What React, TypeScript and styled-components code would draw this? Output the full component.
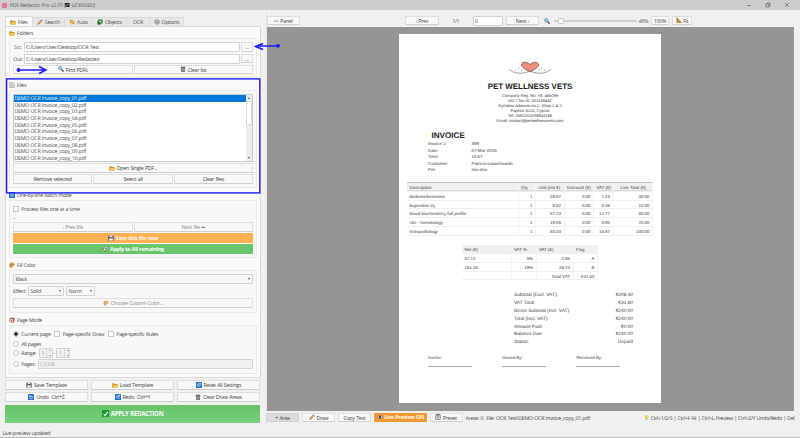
import React from 'react';
import styled, { createGlobalStyle, css } from 'styled-components';

const GlobalStyle = createGlobalStyle`
  * { box-sizing: border-box; }
  html, body { margin: 0; overflow: hidden; }
  body {
    font-family: 'Open Sans', 'Noto Sans', sans-serif;
    font-size: 5.3px;
    letter-spacing: -0.28px;
    word-spacing: 0.35px;
    color: #484848;
    text-rendering: geometricPrecision;
  }
`;

/* ---------- icons ---------- */

const icons: Record<string, React.ReactNode> = {
  app: (
    <>
      <rect x="1" y="1" width="14" height="14" rx="2" fill="#e8476a" />
      <path d="M4 4h8v3H4zM4 9h8v3H4z" fill="#f9a9b8" />
    </>
  ),
  licensed: (
    <>
      <rect width="16" height="16" rx="1" fill="#222" />
      <path d="M3 13V8l3 2 4-6 3 3" stroke="#ddd" strokeWidth="2" fill="none" />
    </>
  ),
  folder: (
    <>
      <path d="M1 14V3h5l2 2h6v9z" fill="#c98a1b" />
      <path d="M1 14l2-7h13l-2 7z" fill="#ffc94a" stroke="#a87a20" strokeWidth=".7" />
    </>
  ),
  pencil: (
    <>
      <path d="M1 15l2-5 3 3z" fill="#444" />
      <path d="M3 10l7-7 3 3-7 7z" fill="#e9a13b" stroke="#80551c" strokeWidth=".8" />
      <path d="M10 3l2-2 3 3-2 2z" fill="#d55c4b" />
    </>
  ),
  auto: (
    <>
      <path d="M8 0l3 5 5 3-5 3-3 5-3-5-5-3 5-3z" fill="#e8a42c" />
      <path d="M2 2l4 1-3 3zM11 12l3-3 0 5z" fill="#8c6520" />
      <circle cx="8" cy="8" r="1.6" fill="#fff3c4" />
    </>
  ),
  objects: (
    <>
      <rect x="3" y="1" width="12" height="11" fill="#2c8c45" />
      <rect x="1" y="5" width="9" height="10" fill="#226b37" />
      <path d="M5 6l3-3 4 4-3 3z" fill="#b7e3a2" />
    </>
  ),
  gear: (
    <g fill="none" stroke="#686868" strokeWidth="1.4">
      <circle cx="8" cy="8" r="6.2" />
      <circle cx="8" cy="8" r="2.6" />
      <path d="M8 2v3M8 11v3M2 8h3M11 8h3M4 4l2 2M10 10l2 2" />
    </g>
  ),
  search: (
    <>
      <path d="M9 9l6 6" stroke="#333" strokeWidth="3" />
      <circle cx="6" cy="6" r="4.5" fill="#9fd6f5" stroke="#42738f" strokeWidth="1.6" />
    </>
  ),
  trash: (
    <>
      <path d="M3 4h10l-1 12H4z" fill="#777" stroke="#444" />
      <path d="M2 2h12v2H2z" fill="#444" />
      <path d="M6 6v8M8 6v8M10 6v8" stroke="#ccc" strokeWidth=".8" />
    </>
  ),
  doc: (
    <>
      <path d="M2 1h8l4 4v10H2z" fill="#eee" stroke="#777" strokeWidth="1.3" />
      <path d="M4 5h5M4 8h8M4 11h8" stroke="#777" strokeWidth="1.2" />
    </>
  ),
  blue: (
    <>
      <rect width="16" height="16" rx="1.5" fill="#1f6fd6" />
      <path d="M12 11H7a3 3 0 010-6h4" stroke="#fff" strokeWidth="1.8" fill="none" />
      <path d="M10 2l4 3-4 3z" fill="#fff" />
    </>
  ),
  undo: (
    <>
      <rect width="16" height="16" rx="1.5" fill="#1f6fd6" />
      <path d="M5 6h4a3 3 0 010 6H4" stroke="#fff" strokeWidth="1.8" fill="none" />
      <path d="M6 3L2 6l4 3z" fill="#fff" />
    </>
  ),
  floppy: (
    <>
      <path d="M1 1h12l2 2v12H1z" fill="#454a54" />
      <rect x="4" y="1" width="8" height="5" fill="#dfe6ee" />
      <rect x="3" y="9" width="10" height="6" fill="#f3f3f3" />
    </>
  ),
  rocket: (
    <>
      <path d="M16 0C9 0 6 4 4 9l3 3c5-2 9-6 9-12z" fill="#f2f6f9" stroke="#567" strokeWidth=".8" />
      <path d="M16 0l-5 1 4 4zM5 6L0 8l3 3zM10 11l-2 5-2-3z" fill="#d64a3c" />
      <circle cx="9.5" cy="6.5" r="2.2" fill="#2675b8" />
      <path d="M4 10l-3 5 5-3z" fill="#f7b733" />
    </>
  ),
  palette: (
    <>
      <path d="M8 1c5 0 8 3 7 7-1 3-4 1-5 3s1 4-3 4C3 15 0 12 1 7c1-4 4-6 7-6z" fill="#dc9330" />
      <circle cx="5" cy="5" r="1.4" fill="#d7402f" />
      <circle cx="10" cy="4" r="1.4" fill="#ffe36b" />
      <circle cx="4" cy="10" r="1.4" fill="#5a4a9c" />
      <circle cx="12" cy="7" r="1.2" fill="#337a3b" />
    </>
  ),
  target: (
    <>
      <circle cx="8" cy="8" r="7" fill="#cf4a3f" />
      <circle cx="7" cy="9" r="4.3" fill="#e9e4ea" />
      <circle cx="7" cy="9" r="2" fill="#cf4a3f" />
      <path d="M7 9l7-7 2 0-1 3-3 1z" fill="#3c7fc0" />
    </>
  ),
  check: (
    <>
      <rect width="16" height="16" rx="1.5" fill="#169a2c" />
      <path d="M3.5 8.5l3 3.5 6-8" stroke="#fff" strokeWidth="2.2" fill="none" />
    </>
  ),
  eye: (
    <>
      <path d="M0 8q8-9 16 0-8 9-16 0z" fill="#fff" stroke="#4a3a3a" strokeWidth="1.3" />
      <circle cx="8" cy="8" r="3.4" fill="#4b2a55" />
    </>
  ),
  clipboard: (
    <>
      <rect x="2" y="2" width="12" height="13" rx="1" fill="#eee" stroke="#555" strokeWidth="1.8" />
      <rect x="5" y="0" width="6" height="4" fill="#555" />
      <path d="M5 7h6M5 10h6" stroke="#555" strokeWidth="1.3" />
    </>
  ),
  bulb: (
    <>
      <circle cx="8" cy="6" r="5" fill="#ffd94a" stroke="#c79a1d" strokeWidth="1" />
      <path d="M6 11h4v4H6z" fill="#777" />
    </>
  ),
  ruler: (
    <>
      <path d="M2 1l13 14H2z" fill="#c88622" stroke="#6d4a14" strokeWidth="1" />
      <path d="M5 9l3 3H5z" fill="#f7ead0" />
    </>
  ),
};

const Svg = styled.svg<{ $size: number; $dim?: boolean }>`
  flex: none;
  width: ${({ $size }) => $size}px;
  height: ${({ $size }) => $size}px;
  margin-right: 1.7px;
  opacity: ${({ $dim }) => ($dim ? 0.7 : 1)};
`;

const Icon: React.FC<{ name: string; size?: number; dim?: boolean }> = ({
  name,
  size = 6,
  dim,
}) => (
  <Svg viewBox="0 0 16 16" $size={size} $dim={dim}>
    {icons[name]}
  </Svg>
);

/* ---------- window ---------- */

const Window = styled.div`
  position: relative;
  width: 800px;
  height: 438px;
  display: flex;
  flex-direction: column;
  background: #f0f0f0;
  white-space: nowrap;
  overflow: hidden;
`;

const TitleBar = styled.header`
  display: flex;
  align-items: center;
  height: 9.5px;
  padding: 0.8px 10px 0 1.5px;
  background: #cdcdcd;
  color: #5c5c5c;
`;

const WindowButtons = styled.svg`
  width: 46px;
  height: 6px;
  margin-left: auto;
`;

const Body = styled.div`
  display: flex;
  height: 418px;
`;

const Sidebar = styled.aside`
  width: 266.5px;
  padding: 6.5px 5px 0;
  border-right: 1px solid #e6e6e6;
`;

const Main = styled.main`
  width: 527px;
  padding-top: 5px;
`;

const StatusBar = styled.footer`
  height: 10.5px;
  padding-left: 2.5px;
  line-height: 11px;
  border-bottom: 1px solid #bdbdbd;
`;

/* ---------- controls ---------- */

const Button = styled.button<{
  $w?: number;
  $tone?: 'orange' | 'lightOrange' | 'green' | 'pressed';
  $off?: boolean;
}>`
  display: flex;
  align-items: center;
  justify-content: center;
  flex: ${({ $w }) => ($w ? 'none' : '1 1 0')};
  width: ${({ $w }) => ($w ? `${$w}px` : 'auto')};
  height: 9.8px;
  padding: 0;
  font: inherit;
  letter-spacing: inherit;
  word-spacing: inherit;
  color: ${({ $off }) => ($off ? '#8a8a8a' : '#444')};
  background: #f8f8f8;
  border: 1px solid #dedede;
  border-bottom-color: #cecece;
  border-radius: 1px;

  ${({ $tone }) =>
    $tone === 'pressed' &&
    css`
      background: #dcdcdc;
      border-color: #d0d0d0;
    `}
  ${({ $tone }) =>
    ($tone === 'orange' || $tone === 'lightOrange') &&
    css`
      background: ${$tone === 'orange' ? '#f0982f' : '#ffb055'};
      border: 0;
      color: #fff6e8;
      font-weight: 700;
    `}
  ${({ $tone }) =>
    $tone === 'green' &&
    css`
      background: #69c56c;
      border: 0;
      color: #f4fff4;
      font-weight: 700;
    `}
`;

const ApplyButton = styled(Button)`
  width: 255px;
  height: 18px;
  margin-top: 2.6px;
  background: linear-gradient(#66c169, #79d07b);
  font-size: 6.1px;
  letter-spacing: -0.25px;
`;

const Row = styled.div<{ $gap?: number; $h?: number; $mt?: number }>`
  display: flex;
  align-items: center;
  gap: ${({ $gap = 1 }) => $gap}px;
  height: ${({ $h = 10 }) => $h}px;
  margin-top: ${({ $mt = 0 }) => $mt}px;
`;

const Field = styled.div<{ $w?: number; $off?: boolean }>`
  display: flex;
  align-items: center;
  flex: ${({ $w }) => ($w ? 'none' : '1')};
  width: ${({ $w }) => ($w ? `${$w}px` : 'auto')};
  height: 10px;
  padding-left: 1px;
  background: ${({ $off }) => ($off ? '#f0f0f0' : '#fff')};
  border: 1px solid #d2d2d2;
  border-radius: 1px;
  color: ${({ $off }) => ($off ? '#a0a0a0' : '#484848')};
`;

const FieldLabel = styled.span<{ $w: number; $align?: string }>`
  width: ${({ $w }) => $w}px;
  text-align: ${({ $align = 'left' }) => $align};
`;

const Select = styled(Field)`
  justify-content: space-between;
  padding: 0 2.5px 0 1.5px;
  background: #f7f7f7;

  &::after {
    content: '';
    border: 1.6px solid transparent;
    border-top: 2px solid #555;
    border-bottom: 0;
  }
`;

const Spin = styled(Field)`
  padding-left: 2px;

  &::before {
    content: '';
    order: 2;
    width: 1px;
    height: 8px;
    margin: 0 2px;
    background: #dadada;
  }

  &::after {
    content: '';
    order: 3;
    width: 2px;
    height: 4px;
    border-top: 1px solid #aaa;
    border-bottom: 1px solid #aaa;
  }
`;

const Check = styled.span<{ $round?: boolean; $on?: boolean }>`
  flex: none;
  width: 6px;
  height: 6px;
  border: 1px solid #c6c6c6;
  border-radius: ${({ $round }) => ($round ? '50%' : '0')};
  background: ${({ $on }) =>
    $on ? 'radial-gradient(circle, #222 0 1.5px, #fff 1.9px)' : '#fff'};
`;

const Option = styled.label<{ $w?: number }>`
  display: flex;
  align-items: center;
  gap: 2.2px;
  width: ${({ $w }) => ($w ? `${$w}px` : 'auto')};
`;

/* ---------- tabs and groups ---------- */

const Tabs = styled.nav`
  display: flex;
  align-items: flex-end;
  height: 10px;
`;

const Tab = styled.div<{ $w: number; $active?: boolean }>`
  display: flex;
  align-items: center;
  justify-content: center;
  width: ${({ $w }) => $w}px;
  height: ${({ $active }) => ($active ? 10 : 9.4)}px;
  padding-top: 0.4px;
  background: ${({ $active }) => ($active ? '#fafafa' : '#e7e7e7')};
  border: 1px solid #dadada;
  border-bottom: 0;
  border-left-width: ${({ $active }) => ($active ? 1 : 0)}px;
`;

const Pane = styled.div`
  width: 256px;
  height: 351.5px;
  padding: 1px 3px 0;
  background: #fafafa;
  border: 1px solid #dadada;
`;

const Group = styled.section<{ $h: number }>`
  display: flex;
  flex-direction: column;
  height: ${({ $h }) => $h}px;
`;

const Legend = styled.div`
  display: flex;
  align-items: center;
  flex: none;
  height: 10px;
  padding-top: 0.9px;
`;

const GroupBox = styled.div<{ $pt?: number }>`
  flex: 1;
  margin-bottom: 2px;
  padding: ${({ $pt = 3 }) => $pt}px 3px 0;
  background: #f8f8f8;
  border: 1px solid #e9e9e9;
`;

const FileList = styled.div`
  display: flex;
  height: 67.5px;
  background: #fff;
  border: 1px solid #c8c8c8;
`;

const FileRows = styled.div`
  flex: 1;
`;

const FileRow = styled.div<{ $selected?: boolean }>`
  height: 6.68px;
  padding-left: 0.5px;
  line-height: 6.8px;
  background: ${({ $selected }) => ($selected ? '#0078d7' : 'transparent')};
  color: ${({ $selected }) => ($selected ? '#e8f4ff' : '#4c4c4c')};
`;

const ScrollBar = styled.div`
  display: flex;
  flex-direction: column;
  align-items: center;
  justify-content: space-between;
  width: 6px;
  padding: 2px 0;
  background: #ededed;

  &::before,
  &::after {
    content: '';
    border: 1.5px solid transparent;
    border-bottom: 2px solid #555;
    border-top: 0;
  }

  &::after {
    transform: rotate(180deg);
  }
`;

const ScrollThumb = styled.div`
  width: 6px;
  height: 24px;
  margin: 1.5px 0 auto;
  background: #fff;
  border: 1px solid #dcdcdc;
`;

const ButtonRows = styled.div`
  display: grid;
  grid-template-columns: repeat(3, 83px);
  column-gap: 3px;
  row-gap: 2.4px;
  padding-top: 2.5px;
`;

/* ---------- preview ---------- */

const TopTools = styled.div`
  display: flex;
  align-items: center;
  height: 12px;
`;

const PageCount = styled.span`
  width: 34.5px;
  text-align: center;
`;

const Slider = styled.div`
  display: flex;
  align-items: center;
  width: 83px;
  height: 6px;
  margin: 0 2px;

  &::before {
    content: '';
    width: 4px;
    height: 2px;
    background: #d0d0d0;
  }

  &::after {
    content: '';
    flex: 1;
    height: 2px;
    background: #d0d0d0;
  }
`;

const Knob = styled.span`
  width: 6px;
  height: 6px;
  background: #fff;
  border: 1px solid #c4c4c4;
  border-radius: 2px;
`;

const Canvas = styled.div`
  display: flex;
  justify-content: center;
  height: 384.5px;
  padding-top: 7px;
  background: #959595;
`;

const Page = styled.article`
  width: 262px;
  height: 369.5px;
  padding: 27.5px 8px 0;
  background: #fff;
  color: #3a3a3a;
  font-family: 'Liberation Sans', Arial, sans-serif;
  font-size: 4.4px;
  letter-spacing: 0;
  word-spacing: 0;
`;

const Heart = styled.svg`
  display: block;
  width: 44px;
  height: 14px;
  margin: 0 auto;
`;

const Company = styled.h1`
  margin: 7px 0 0;
  font-size: 7.95px;
  line-height: 10px;
  text-align: center;
  color: #1c1c1c;
`;

const Address = styled.div`
  margin-top: 2.2px;
  font-size: 4.05px;
  line-height: 4.88px;
  text-align: center;
`;

const InvoiceTitle = styled.h2`
  margin: 7.6px 0 0 24.5px;
  font-size: 8.1px;
  line-height: 10px;
  color: #1c1c1c;
`;

const Meta = styled.dl`
  display: grid;
  grid-template-columns: 43.5px auto;
  margin: 0 0 0 21px;
  line-height: 6.52px;

  dd, dt { margin: 0; }
`;

const Table = styled.div<{ $cols: string; $w: number; $mt: number }>`
  display: grid;
  grid-template-columns: ${({ $cols }) => $cols};
  width: ${({ $w }) => $w}px;
  margin: ${({ $mt }) => $mt}px auto 0;
`;

const Cell = styled.div<{ $head?: boolean; $left?: boolean; $pl?: number; $rule?: boolean }>`
  height: 8.76px;
  padding: 0 2.5px 0 ${({ $pl = 2.5 }) => $pl}px;
  line-height: 9.4px;
  text-align: ${({ $left, $head }) => ($left || $head ? 'left' : 'right')};
  background: ${({ $head }) => ($head ? '#f0f0f0' : '#fff')};
  border-right: 1px solid #f3f3f3;
  border-bottom: 1px solid #efefef;
  box-shadow: ${({ $rule }) => ($rule ? '0 -1px 0 #c4c4c4, inset 0 -1px 0 #dadada' : 'none')};
`;

const Totals = styled.div`
  width: 119px;
  margin: 11.8px 20px 0 auto;
  font-size: 4.8px;
`;

const TotalRow = styled.div`
  display: flex;
  justify-content: space-between;
  line-height: 7.87px;
`;

const Signatures = styled.div`
  display: flex;
  gap: 30.2px;
  margin: 7.4px 0 0 21px;
`;

const Signature = styled.div`
  width: 44px;
  height: 12.5px;
  line-height: 6px;
  border-bottom: 1px solid #aaa;
`;

const BottomTools = styled.div`
  display: flex;
  align-items: center;
  gap: 3px;
  height: 13px;
  margin-left: -0.5px;
`;

const Hint = styled.span`
  display: flex;
  align-items: center;
  width: 149.5px;
  margin-left: auto;
  letter-spacing: -0.33px;
`;

const Annotations = styled.svg`
  position: absolute;
  inset: 0;
  width: 800px;
  height: 438px;
  pointer-events: none;
`;

const files = Array.from(
  { length: 10 },
  (_, i) => `DEMO OCR Invoice_copy_${String(i + 1).padStart(2, '0')}.pdf`
);

const items = [
  ['dorbene/betamine', '1', '28.57', '0.00', '1.43', '30.00'],
  ['bupredine inj', '1', '9.52', '0.00', '0.48', '10.00'],
  ['blood biochemistry full profile', '1', '67.23', '0.00', '12.77', '80.00'],
  ['cbc - hematology', '1', '19.05', '0.00', '0.95', '20.00'],
  ['histopathology', '1', '84.03', '0.00', '15.97', '100.00'],
];

const vat = [
  ['57.14', '5%', '2.86', 'A'],
  ['151.26', '19%', '28.74', 'B'],
  ['', '', 'Total VAT', '€31.60'],
];

const meta = [
  ['Invoice #:', '399'],
  ['Date:', '07-Mar-2026'],
  ['Time:', '10:57'],
  ['Customer:', 'Patricia Dawichowski'],
  ['Pet:', 'miu miu'],
];

const totals = [
  ['Subtotal (Excl. VAT):', '€208.40'],
  ['VAT Total:', '€31.60'],
  ['Gross Subtotal (Incl. VAT):', '€240.00'],
  ['Total (Incl. VAT):', '€240.00'],
  ['Amount Paid:', '€0.00'],
  ['Balance Due:', '€240.00'],
  ['Status:', 'Unpaid'],
];

const Invoice: React.FC = () => (
  <Page>
    <Heart viewBox="0 0 44 14">
      <path
        d="M22 11C17 8 13 6 13.5 3.5 14 .5 19 .5 22 3.6 25 .5 30 .5 30.5 3.5 31 6 27 8 22 11z"
        fill="#f0907c"
        stroke="#5c4545"
        strokeWidth=".7"
      />
      <path
        d="M1 8.5Q8 14 18 11.5L22 10l4 1.5Q36 14 43 8.5"
        fill="none"
        stroke="#777"
        strokeWidth=".7"
      />
      <path d="M7 9h1M10 7h1M13 9h1M31 9h1M33 7h1M36 9h1" stroke="#777" strokeWidth=".8" />
    </Heart>
    <Company>PET WELLNESS VETS</Company>
    <Address>
      <div>Company Reg. No: HE 466099</div>
      <div>VAT / Tax ID: 50118844C</div>
      <div>Kyriakou Adamou no.2, Shop 2 &amp; 3</div>
      <div>Paphos 8220, Cyprus</div>
      <div>Tel: 26910310/99941186</div>
      <div>Email: contact@petwellnessvets.com</div>
    </Address>
    <InvoiceTitle>INVOICE</InvoiceTitle>
    <Meta>
      {meta.map(([k, v]) => (
        <React.Fragment key={k}>
          <dt>{k}</dt>
          <dd>{v}</dd>
        </React.Fragment>
      ))}
    </Meta>
    <Table $cols="111.5px 17.5px 28.5px 29.5px 19.5px 39.5px" $w={246} $mt={9.4}>
      {['Description', 'Qty', 'Unit (net €)', 'Discount (€)', 'VAT (€)', 'Line Total (€)'].map(
        (h, i) => (
          <Cell key={h} $head $rule $pl={i === 5 ? 7 : 2.5}>
            {h}
          </Cell>
        )
      )}
      {items.map((row) =>
        row.map((c, i) => (
          <Cell key={row[0] + i} $left={i === 0}>
            {c}
          </Cell>
        ))
      )}
    </Table>
    <Table $cols="49.5px 25px 37px 24.5px" $w={136} $mt={9.8}>
      {['Net (€)', 'VAT %', 'VAT (€)', 'Flag'].map((h) => (
        <Cell key={h} $head>
          {h}
        </Cell>
      ))}
      {vat.map((row, r) =>
        row.map((c, i) => (
          <Cell key={`${r}-${i}`} $left={i === 0}>
            {c}
          </Cell>
        ))
      )}
    </Table>
    <Totals>
      {totals.map(([k, v]) => (
        <TotalRow key={k}>
          <span>{k}</span>
          <span>{v}</span>
        </TotalRow>
      ))}
    </Totals>
    <Signatures>
      <Signature>Doctor:</Signature>
      <Signature>Issued By:</Signature>
      <Signature>Received By:</Signature>
    </Signatures>
  </Page>
);

const Push = styled.div<{ $w: number }>`
  flex: none;
  width: ${({ $w }) => $w}px;
`;

export default function App() {
  return (
    <Window>
      <GlobalStyle />
      <TitleBar>
        <Icon name="app" size={5} />
        <Push $w={1.5} />
        PDF Redactor Pro v2.79 [<Icon name="licensed" size={4.5} />
        LICENSED]
        <WindowButtons viewBox="0 0 46 6" fill="none" stroke="#555" strokeWidth=".6">
          <path d="M3 3.5h4M22 2h3v3h-3zM23 2V1h3v3h-1M41 1l4 4M45 1l-4 4" />
        </WindowButtons>
      </TitleBar>
      <Body>
        <Sidebar>
          <Tabs>
            <Tab $w={28} $active>
              <Icon name="folder" /> Files
            </Tab>
            <Tab $w={32}>
              <Icon name="pencil" /> Search
            </Tab>
            <Tab $w={28}>
              <Icon name="auto" /> Auto
            </Tab>
            <Tab $w={34}>
              <Icon name="objects" /> Objects
            </Tab>
            <Tab $w={23}>OCR</Tab>
            <Tab $w={34}>
              <Icon name="gear" /> Options
            </Tab>
          </Tabs>
          <Pane>
            <Group $h={52}>
              <Legend>
                <Icon name="folder" /> Folders
              </Legend>
              <GroupBox>
                <Row>
                  <FieldLabel $w={10} $align="center">Src:</FieldLabel>
                  <Field>C:/Users/User/Desktop/OCR Test</Field>
                  <Button $w={12}>...</Button>
                </Row>
                <Row $mt={1.5}>
                  <FieldLabel $w={10} $align="center">Out:</FieldLabel>
                  <Field>C:/Users/User/Desktop/Redacted</Field>
                  <Button $w={12}>...</Button>
                </Row>
                <Row $mt={1}>
                  <Button>
                    <Icon name="search" /> Find PDFs
                  </Button>
                  <Button>
                    <Icon name="trash" /> Clear list
                  </Button>
                </Row>
              </GroupBox>
            </Group>
            <Group $h={110}>
              <Legend>
                <Icon name="doc" /> Files
              </Legend>
              <GroupBox>
                <FileList>
                  <FileRows>
                    {files.map((f, i) => (
                      <FileRow key={f} $selected={i === 0}>
                        {f}
                      </FileRow>
                    ))}
                  </FileRows>
                  <ScrollBar>
                    <ScrollThumb />
                  </ScrollBar>
                </FileList>
                <Row $mt={1.5}>
                  <Button>
                    <Icon name="folder" /> Open Single PDF...
                  </Button>
                </Row>
                <Row $mt={1}>
                  <Button>Remove selected</Button>
                  <Button>Select all</Button>
                  <Button>Clear files</Button>
                </Row>
              </GroupBox>
            </Group>
            <Group $h={70}>
              <Legend>
                <Icon name="blue" /> One-by-one batch mode
              </Legend>
              <GroupBox $pt={3.5}>
                <Row $h={9}>
                  <Option>
                    <Check /> Process files one at a time
                  </Option>
                </Row>
                <Row $h={7}>...</Row>
                <Row $mt={1.5}>
                  <Button $off>‹ Prev file</Button>
                  <Button $off>Next file ➡</Button>
                </Row>
                <Row $mt={1}>
                  <Button $tone="lightOrange">
                    <Icon name="floppy" /> Save this file now
                  </Button>
                </Row>
                <Row $mt={1}>
                  <Button $tone="green">
                    <Icon name="rocket" /> Apply to All remaining
                  </Button>
                </Row>
              </GroupBox>
            </Group>
            <Group $h={55}>
              <Legend>
                <Icon name="palette" /> Fill Color
              </Legend>
              <GroupBox>
                <Row>
                  <Select>Black</Select>
                </Row>
                <Row $mt={2} $gap={2}>
                  <FieldLabel $w={13}>Effect:</FieldLabel>
                  <Select $w={36}>Solid</Select>
                  <Select $w={29}>Norm</Select>
                </Row>
                <Row $mt={2}>
                  <Button $off>
                    <Icon name="palette" dim /> Choose Custom Color...
                  </Button>
                </Row>
              </GroupBox>
            </Group>
            <Group $h={61}>
              <Legend>
                <Icon name="target" /> Page Mode
              </Legend>
              <GroupBox>
                <Row $gap={3.8}>
                  <Option>
                    <Check $round $on /> Current page
                  </Option>
                  <Option>
                    <Check /> Page-specific Draw
                  </Option>
                  <Option>
                    <Check /> Page-specific Rules
                  </Option>
                </Row>
                <Row $h={9}>
                  <Option>
                    <Check $round /> All pages
                  </Option>
                </Row>
                <Row>
                  <Option $w={24.5}>
                    <Check $round /> Range:
                  </Option>
                  <Spin $off $w={14}>1</Spin>-<Spin $off $w={14}>1</Spin>
                </Row>
                <Row $mt={1}>
                  <Option $w={23.5}>
                    <Check $round /> Pages:
                  </Option>
                  <Field $off>1,3,5-8</Field>
                </Row>
              </GroupBox>
            </Group>
          </Pane>
          <ButtonRows>
            <Button>
              <Icon name="floppy" /> Save Template
            </Button>
            <Button>
              <Icon name="folder" /> Load Template
            </Button>
            <Button>
              <Icon name="blue" /> Reset All Settings
            </Button>
            <Button>
              <Icon name="undo" /> Undo&nbsp; Ctrl+Z
            </Button>
            <Button>
              <Icon name="blue" /> Redo&nbsp; Ctrl+Y
            </Button>
            <Button>
              <Icon name="trash" /> Clear Draw Areas
            </Button>
          </ButtonRows>
          <ApplyButton $tone="green">
            <Icon name="check" size={7.5} /> APPLY REDACTION
          </ApplyButton>
        </Sidebar>
        <Main>
          <TopTools>
            <Button $w={33}>&lt;&lt; Panel</Button>
            <Push $w={105.5} />
            <Button $w={33.5}>‹ Prev</Button>
            <PageCount>1/1</PageCount>
            <Field $w={30}>0</Field>
            <Push $w={3} />
            <Button $w={33}>Next ›</Button>
            <Push $w={5} />
            <Icon name="search" />
            <Slider>
              <Knob />
            </Slider>
            <Push $w={12.5}>49%</Push>
            <Button $w={17.5}>100%</Button>
            <Push $w={3} />
            <Button $w={20.5}>
              <Icon name="ruler" /> Fit
            </Button>
          </TopTools>
          <Canvas>
            <Invoice />
          </Canvas>
          <BottomTools>
            <Button $w={33} $tone="pressed">
              + Area
            </Button>
            <Button $w={33}>
              <Icon name="pencil" /> Draw
            </Button>
            <Button $w={33}>Copy Text</Button>
            <Button $w={52.5} $tone="orange">
              <Icon name="eye" /> Live Preview ON
            </Button>
            <Button $w={33}>
              <Icon name="clipboard" /> Preset
            </Button>
            <span>Areas: 0&nbsp; File: OCR Test\DEMO OCR Invoice_copy_01.pdf</span>
            <Hint>
              <Icon name="bulb" size={5} /> Ctrl+1/2/3 | Ctrl+F Fit | Ctrl+L Preview | Ctrl+Z/Y
              Undo/Redo | Del
            </Hint>
          </BottomTools>
        </Main>
      </Body>
      <StatusBar>Live preview updated</StatusBar>
      <Annotations fill="none" stroke="#1c1cf5" strokeWidth="1.4">
        <rect x="6.6" y="78.9" width="253.2" height="114" />
        <path d="M278 46H256M263 43.5L255.5 46.5L263 49.5" />
        <path d="M18 70H46M39 66.5L46 70L39 73.5" />
        <circle cx="278" cy="45.8" r="1.2" fill="#1c1cf5" />
        <circle cx="18.5" cy="70" r="1.2" fill="#1c1cf5" />
      </Annotations>
    </Window>
  );
}
